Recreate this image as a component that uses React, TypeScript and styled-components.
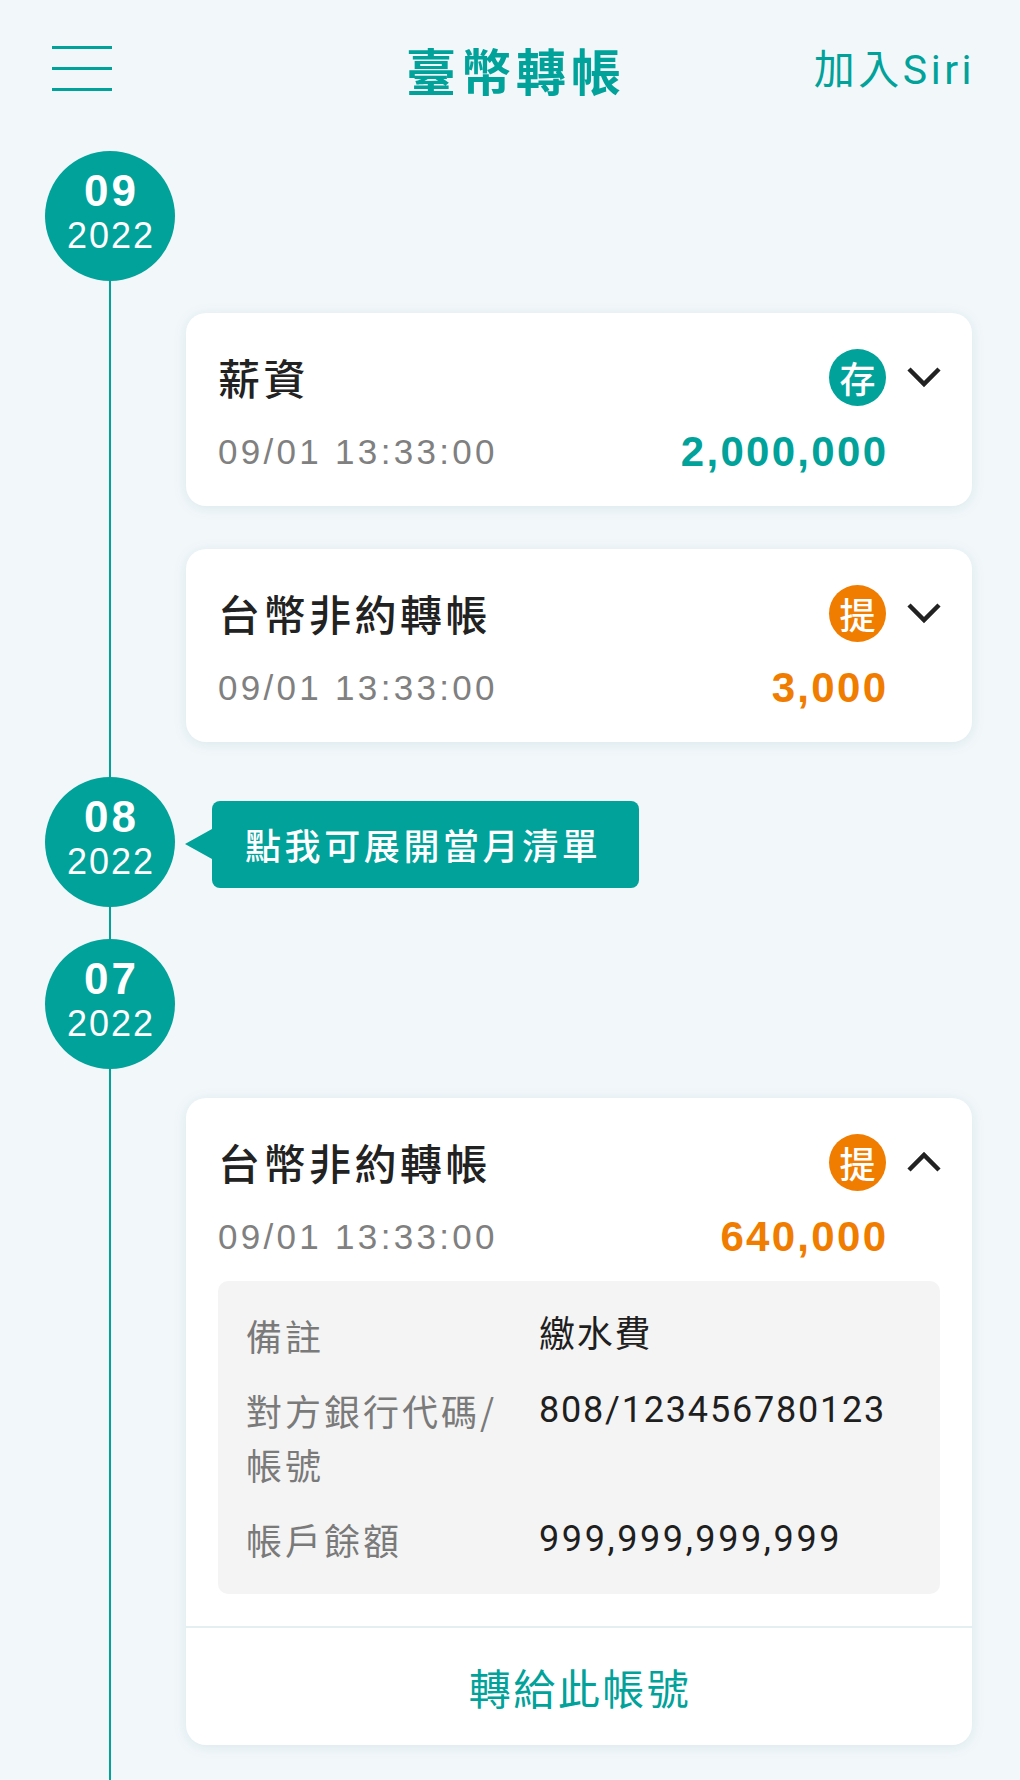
import React from "react";
import styled, { createGlobalStyle } from "styled-components";

const TEAL = "#00a29a";
const ORANGE = "#f07c00";
const CJK = `"Noto Sans CJK TC", "Noto Sans CJK SC", sans-serif`;
const LATIN = `"Liberation Sans", "Noto Sans CJK TC", sans-serif`;
const ROBOTO = `"Roboto", "Noto Sans CJK TC", sans-serif`;

const GlobalStyle = createGlobalStyle`
  html, body { margin: 0; padding: 0; background: #f2f7fa; }
  body { font-family: ${CJK}; -webkit-font-smoothing: antialiased; }
  * { box-sizing: border-box; }
`;

const Page = styled.div`
  width: 1020px;
  min-height: 1780px;
  background: #f2f7fa;
  padding-bottom: 35px;
`;

const Header = styled.header`
  display: grid;
  grid-template-columns: 1fr auto 1fr;
  align-items: center;
  height: 138px;
  padding: 0 45px 0 52px;
`;

const MenuButton = styled.button`
  display: flex;
  flex-direction: column;
  gap: 18px;
  width: 60px;
  padding: 0;
  border: 0;
  background: transparent;
  justify-self: start;
  margin-top: -2px;
  span {
    display: block;
    height: 3px;
    background: ${TEAL};
  }
`;

const Title = styled.h1`
  margin: 0;
  padding-left: 5px;
  font-family: ${CJK};
  font-size: 50px;
  font-weight: 700;
  letter-spacing: 5px;
  color: ${TEAL};
  line-height: 1;
`;

const SiriLink = styled.a`
  justify-self: end;
  font-family: ${ROBOTO};
  font-size: 41px;
  letter-spacing: 3.5px;
  color: ${TEAL};
  text-decoration: none;
  line-height: 1;
  margin-top: 2px;
`;

const Timeline = styled.div`
  position: relative;
  padding-top: 13px;
`;

const Line = styled.div`
  position: absolute;
  left: 109px;
  top: 80px;
  bottom: -35px;
  width: 2px;
  background: ${TEAL};
`;

const MonthRow = styled.div<{ $mt: number }>`
  position: relative;
  display: flex;
  align-items: center;
  margin-top: ${(p) => p.$mt}px;
  padding-left: 45px;
`;

const MonthCircle = styled.div`
  width: 130px;
  height: 130px;
  border-radius: 50%;
  background: ${TEAL};
  color: #fff;
  display: flex;
  flex-direction: column;
  align-items: center;
  justify-content: center;
  padding-bottom: 8px;
  font-family: ${LATIN};
  flex-shrink: 0;
`;

const MonthNum = styled.div`
  font-size: 44px;
  font-weight: 700;
  letter-spacing: 3px;
  padding-left: 3px;
  line-height: 46px;
`;

const YearNum = styled.div`
  font-size: 36px;
  letter-spacing: 2px;
  padding-left: 2px;
  line-height: 40px;
  margin-top: 2px;
`;

const Tip = styled.div`
  position: relative;
  margin-left: 37px;
  margin-top: 4px;
  height: 87px;
  display: flex;
  align-items: center;
  padding: 0 38px 0 33px;
  background: ${TEAL};
  border-radius: 8px;
  color: #fff;
  font-family: ${CJK};
  font-size: 36px;
  font-weight: 500;
  letter-spacing: 3.6px;
  &::before {
    content: "";
    position: absolute;
    left: -27px;
    top: 50%;
    transform: translateY(-50%);
    border-style: solid;
    border-width: 15px 27px 15px 0;
    border-color: transparent ${TEAL} transparent transparent;
  }
`;

const Card = styled.div<{ $mt: number }>`
  position: relative;
  margin: ${(p) => p.$mt}px 48px 0 186px;
  background: #fff;
  border-radius: 20px;
  box-shadow: 0 2px 14px rgba(0, 110, 120, 0.1);
  overflow: hidden;
`;

const CardMain = styled.div<{ $open?: boolean }>`
  padding: 35px 32px ${(p) => (p.$open ? 0 : 29)}px 32px;
`;

const CardHead = styled.div`
  display: flex;
  align-items: center;
  height: 58px;
`;

const CardTitle = styled.div`
  flex: 1;
  font-family: ${CJK};
  font-size: 42px;
  font-weight: 500;
  letter-spacing: 3.5px;
  color: #222;
  line-height: 1;
`;

const Badge = styled.div<{ $color: string }>`
  width: 57px;
  height: 57px;
  border-radius: 50%;
  background: ${(p) => p.$color};
  color: #fff;
  display: flex;
  align-items: center;
  justify-content: center;
  font-family: ${CJK};
  font-size: 36px;
  font-weight: 500;
  line-height: 1;
`;

const Chevron = styled.svg`
  width: 36px;
  height: 22px;
  margin-left: 20px;
  margin-right: -2px;
`;

const InfoRow = styled.div`
  display: flex;
  align-items: center;
  justify-content: space-between;
  height: 50px;
  margin-top: 21px;
  padding-right: 54px;
`;

const DateText = styled.div`
  font-family: ${LATIN};
  font-size: 35px;
  letter-spacing: 3.3px;
  color: #808080;
`;

const Amount = styled.div<{ $color: string }>`
  font-family: ${LATIN};
  font-size: 42px;
  font-weight: 700;
  letter-spacing: 2.3px;
  margin-right: -2.3px;
  color: ${(p) => p.$color};
`;

const DetailBox = styled.div`
  margin: 19px 32px 0 32px;
  background: #f4f4f4;
  border-radius: 10px;
  padding: 27px 28px 28px 28px;
  display: grid;
  grid-template-columns: 265px 1fr;
  column-gap: 28px;
  row-gap: 21px;
`;

const DLabel = styled.div`
  font-family: ${CJK};
  font-size: 36px;
  letter-spacing: 3px;
  line-height: 54px;
  color: #7a7a7a;
  white-space: pre-line;
`;

const DValue = styled.div<{ $wide?: boolean }>`
  font-family: ${ROBOTO};
  font-size: 36px;
  letter-spacing: ${(p) => (p.$wide ? 2.6 : 1.8)}px;
  line-height: 54px;
  color: #1f1f1f;
`;

const Divider = styled.div`
  height: 2px;
  margin-top: 32px;
  background: #e4eff1;
`;

const ActionButton = styled.button`
  display: block;
  width: 100%;
  height: 117px;
  border: 0;
  background: transparent;
  font-family: ${CJK};
  font-size: 42px;
  letter-spacing: 2.5px;
  color: ${TEAL};
  padding: 0 0 0 2px;
`;

type Tx = {
  title: string;
  time: string;
  amount: string;
  kind: "in" | "out";
};

const ChevronIcon = ({ up }: { up?: boolean }) => (
  <Chevron viewBox="0 0 36 22">
    <polyline
      points={up ? "3,19 18,4 33,19" : "3,3 18,18 33,3"}
      fill="none"
      stroke="#222"
      strokeWidth="4.5"
    />
  </Chevron>
);

const TxHeader = ({ tx, open }: { tx: Tx; open?: boolean }) => {
  const color = tx.kind === "in" ? TEAL : ORANGE;
  return (
    <>
      <CardHead>
        <CardTitle>{tx.title}</CardTitle>
        <Badge $color={color}>{tx.kind === "in" ? "存" : "提"}</Badge>
        <ChevronIcon up={open} />
      </CardHead>
      <InfoRow>
        <DateText>{tx.time}</DateText>
        <Amount $color={color}>{tx.amount}</Amount>
      </InfoRow>
    </>
  );
};

const Month = ({ m, y }: { m: string; y: string }) => (
  <MonthCircle>
    <MonthNum>{m}</MonthNum>
    <YearNum>{y}</YearNum>
  </MonthCircle>
);

const details = [
  { label: "備註", value: "繳水費" },
  { label: "對方銀行代碼/\n帳號", value: "808/123456780123" },
  { label: "帳戶餘額", value: "999,999,999,999", wide: true },
];

export default function App() {
  return (
    <Page>
      <GlobalStyle />
      <Header>
        <MenuButton aria-label="menu">
          <span />
          <span />
          <span />
        </MenuButton>
        <Title>臺幣轉帳</Title>
        <SiriLink>加入Siri</SiriLink>
      </Header>
      <Timeline>
        <Line />
        <MonthRow $mt={0}>
          <Month m="09" y="2022" />
        </MonthRow>
        <Card $mt={32}>
          <CardMain>
            <TxHeader
              tx={{ title: "薪資", time: "09/01 13:33:00", amount: "2,000,000", kind: "in" }}
            />
          </CardMain>
        </Card>
        <Card $mt={43}>
          <CardMain>
            <TxHeader
              tx={{ title: "台幣非約轉帳", time: "09/01 13:33:00", amount: "3,000", kind: "out" }}
            />
          </CardMain>
        </Card>
        <MonthRow $mt={35}>
          <Month m="08" y="2022" />
          <Tip>點我可展開當月清單</Tip>
        </MonthRow>
        <MonthRow $mt={32}>
          <Month m="07" y="2022" />
        </MonthRow>
        <Card $mt={29}>
          <CardMain $open>
            <TxHeader
              open
              tx={{ title: "台幣非約轉帳", time: "09/01 13:33:00", amount: "640,000", kind: "out" }}
            />
          </CardMain>
          <DetailBox>
            {details.map((d) => (
              <React.Fragment key={d.label}>
                <DLabel>{d.label}</DLabel>
                <DValue $wide={d.wide}>{d.value}</DValue>
              </React.Fragment>
            ))}
          </DetailBox>
          <Divider />
          <ActionButton>轉給此帳號</ActionButton>
        </Card>
      </Timeline>
    </Page>
  );
}
